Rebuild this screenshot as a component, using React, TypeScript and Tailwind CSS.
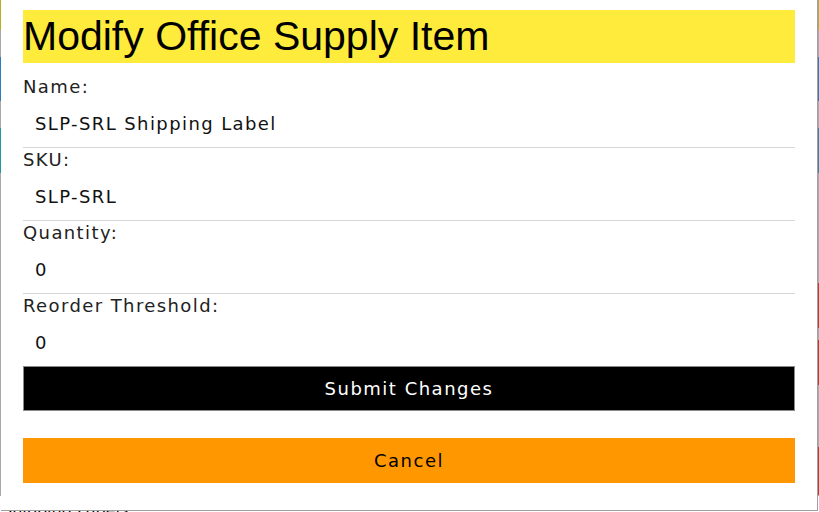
import { useState } from "react";

const fields = [
  { label: "Name:", value: "SLP-SRL Shipping Label" },
  { label: "SKU:", value: "SLP-SRL" },
  { label: "Quantity:", value: "0" },
  { label: "Reorder Threshold:", value: "0" },
];

// edge colours of the inventory table that sits behind the dialog
const rows = [
  { h: "h-[30px]", l: "border-l-[#b8ad2a]", r: "border-r-[#b8ad2a]" },
  { h: "h-[27px]", l: "border-l-[#a9a9a9]", r: "border-r-[#a9a9a9]" },
  { h: "h-[44px]", l: "border-l-[#2b7bbf]", r: "border-r-[#2b7bbf]" },
  { h: "h-[27px]", l: "border-l-[#a9a9a9]", r: "border-r-[#a9a9a9]" },
  { h: "h-[45px]", l: "border-l-[#1f95a8]", r: "border-r-[#2b86b5]" },
  { h: "h-[110px]", l: "border-l-[#a9a9a9]", r: "border-r-[#a9a9a9]" },
  { h: "h-[45px]", l: "border-l-[#a9a9a9]", r: "border-r-[#c0392b]" },
  { h: "h-[12px]", l: "border-l-[#a9a9a9]", r: "border-r-[#a9a9a9]" },
  { h: "h-[45px]", l: "border-l-[#a9a9a9]", r: "border-r-[#c0392b]" },
  { h: "h-[62px]", l: "border-l-[#a9a9a9]", r: "border-r-[#a9a9a9]" },
  { h: "h-[48px]", l: "border-l-[#a9a9a9]", r: "border-r-[#c0392b]" },
];

export default function App() {
  const [values, setValues] = useState(fields.map((f) => f.value));

  return (
    <div className="relative w-[819px] h-[512px] overflow-hidden bg-white font-['DejaVu_Sans',sans-serif]">
      {/* page behind the modal */}
      <div className="flex flex-col">
        {rows.map((r, i) => (
          <div key={i} className={`${r.h} border-l border-r ${r.l} ${r.r}`} />
        ))}
        <div className="h-[40px] border-t border-[#a9a9a9] pt-[4px] pl-[2px] text-[16px] leading-[20px] text-black">
          Shipping Labels
        </div>
      </div>

      {/* dialog */}
      <div className="absolute left-[1px] top-0 w-[817px] h-[511px] bg-white border-r border-b border-[#a0a0a0] px-[22px] pt-[10px]">
        <h1 className="h-[53px] bg-[#ffeb3b] text-[41px] leading-[53px] font-['Liberation_Sans',Arial,sans-serif] text-black">
          Modify Office Supply Item
        </h1>
        <form className="mt-[12px] flex flex-col tracking-[1.4px]" onSubmit={(e) => e.preventDefault()}>
          {fields.map((f, i) => (
            <div key={f.label} className="flex flex-col">
              <label className="h-[24px] text-[18px] leading-[24px] text-[#222]">{f.label}</label>
              <input
                value={values[i]}
                onChange={(e) => setValues(values.map((v, j) => (j === i ? e.target.value : v)))}
                className={`h-[49px] px-[12px] text-[18px] tracking-[1.4px] text-[#111] bg-transparent outline-none ${i < fields.length - 1 ? "border-b border-[#d6d6d6]" : ""}`}
              />
            </div>
          ))}
          <button type="submit" className="-mt-[1px] h-[45px] bg-black text-white text-[18px] tracking-[1.5px] border border-[#8a8a8a]">
            Submit Changes
          </button>
          <button type="button" className="mt-[27px] h-[45px] bg-[#ff9800] text-black text-[18px] tracking-[1.5px]">
            Cancel
          </button>
        </form>
      </div>
    </div>
  );
}
